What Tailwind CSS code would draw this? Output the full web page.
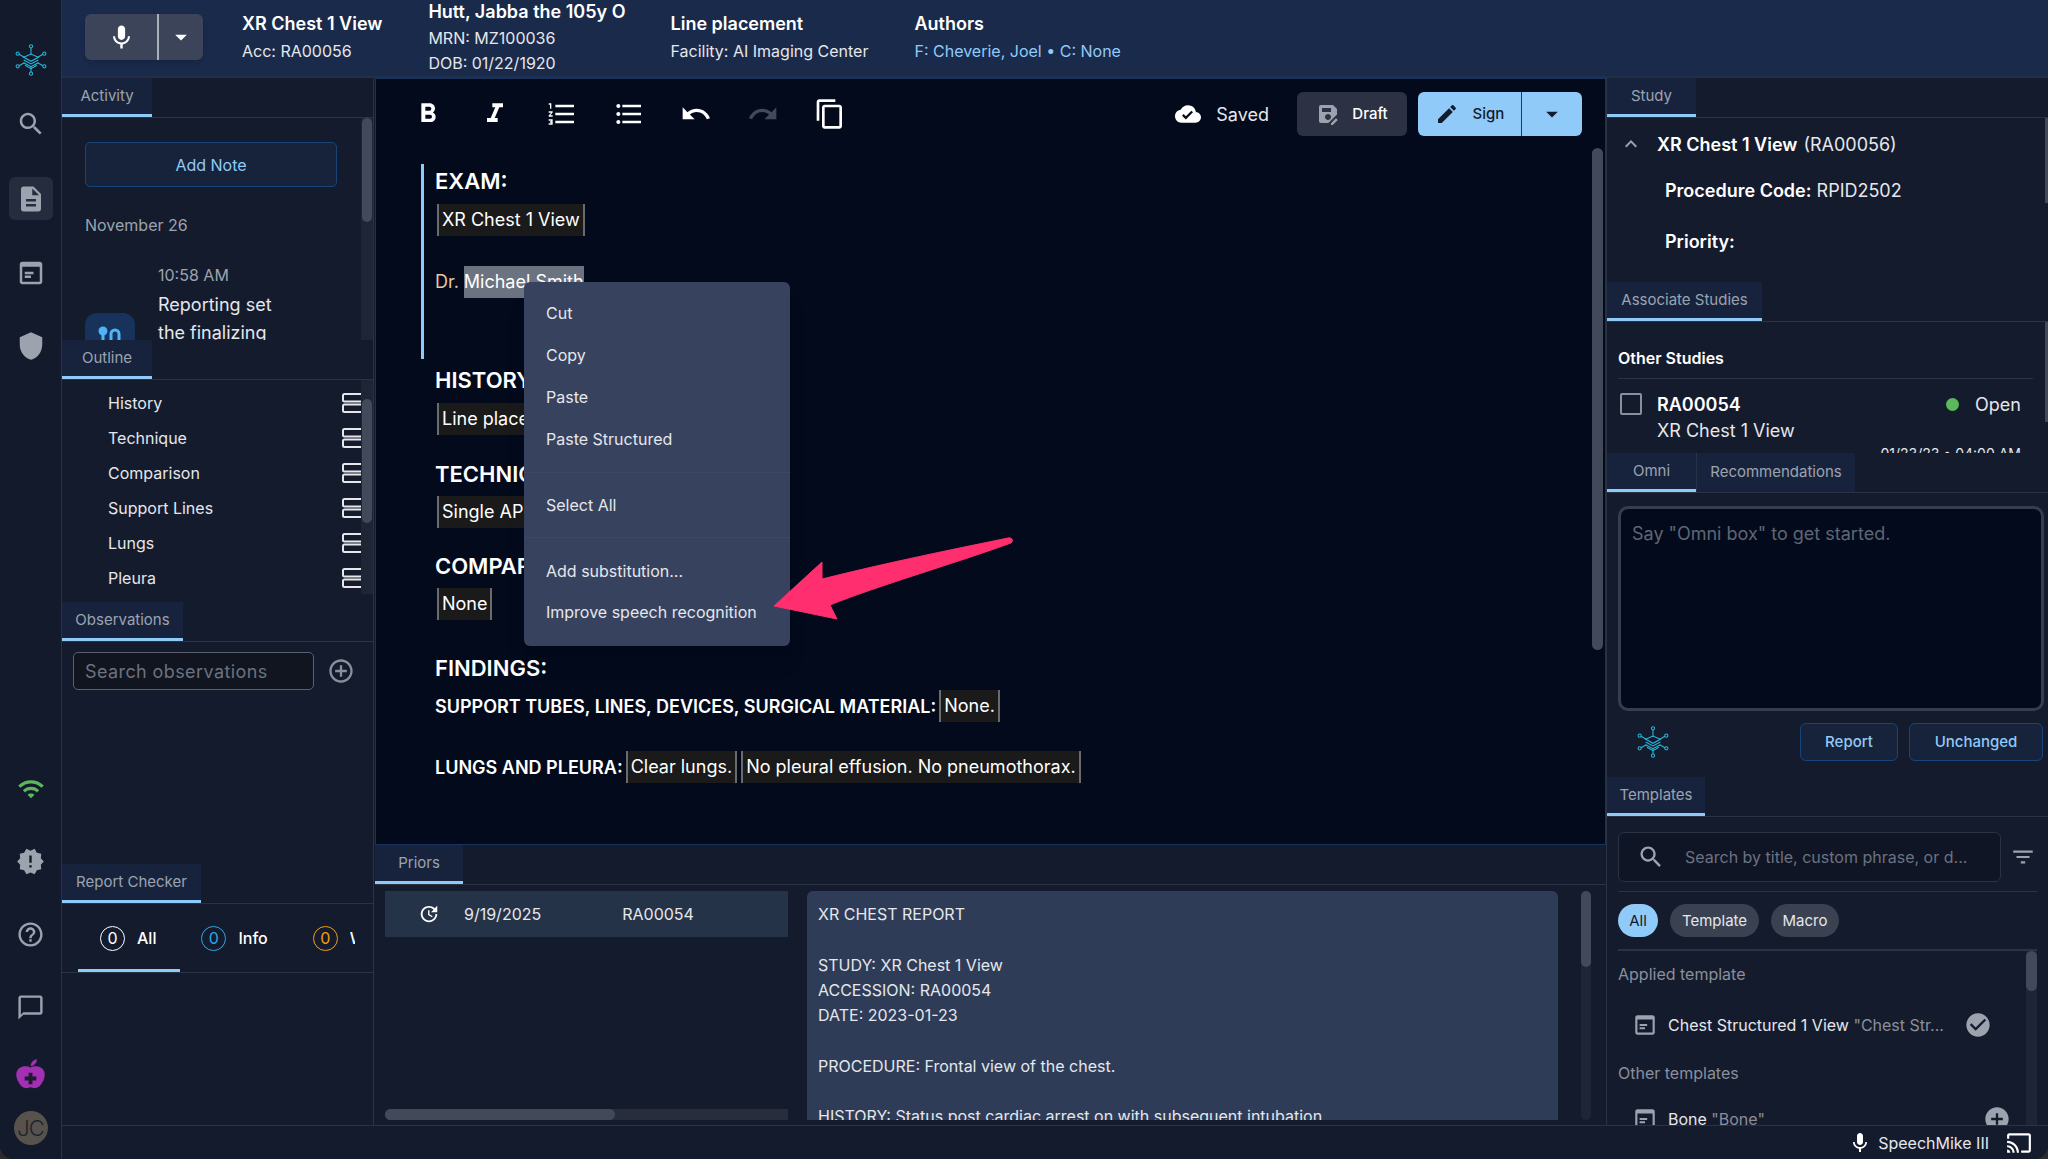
<!DOCTYPE html>
<html lang="en">
<head>
    <meta charset="UTF-8">
    <title>Report Editor</title>
    <script src="https://cdn.jsdelivr.net/npm/@tailwindcss/browser@4"></script>
</head>
<body class="bg-[#2b2b2b] font-[Inter,sans-serif] text-white overflow-hidden">
<svg class="hidden">
    <symbol id="logo" viewBox="0 0 48 48">
        <g fill="none" stroke="#29b6d8" stroke-width="1.6">
            <circle cx="24" cy="3.5" r="2.4"/><circle cx="24" cy="44.5" r="2.4"/>
            <circle cx="4" cy="14.5" r="2.4"/><circle cx="44" cy="14.5" r="2.4"/>
            <circle cx="4" cy="33.5" r="2.4"/><circle cx="44" cy="33.5" r="2.4"/>
            <path d="M24 6v10M24 33v9M6 15.5l8 4.5M42 15.5l-8 4.5M6 32.5l8-4.5M42 32.5l-8-4.5"/>
            <path d="M13 20l11-5 11 5-11 6zM13 24l11 6 11-6M13 28l11 6 11-6M15 32l9 5 9-5"/>
        </g>
    </symbol>
</svg>
<div class="relative flex h-[1159px] w-[2048px] rounded-b-[14px] overflow-hidden bg-[#141b2d]">
    <!-- nav rail -->
    <nav class="w-[62px] shrink-0 flex flex-col items-center bg-[#131a2b] border-r border-[#2a3346] pt-[28px] pb-[14px]">
        <div class="h-[64px] flex items-center"><svg class="w-[32px] h-[36px]"><use href="#logo"/></svg></div>
        <div class="h-[64px] flex items-center">
            <svg class="w-[30px] h-[30px] fill-[#9ca3af]" viewBox="0 0 24 24"><path d="M15.5 14h-.79l-.28-.27C15.41 12.59 16 11.11 16 9.5 16 5.91 13.09 3 9.5 3S3 5.91 3 9.5 5.91 16 9.5 16c1.61 0 3.09-.59 4.23-1.57l.27.28v.79l5 4.99L20.49 19l-4.99-5zm-6 0C7.01 14 5 11.99 5 9.5S7.01 5 9.5 5 14 7.01 14 9.5 11.99 14 9.5 14z"/></svg>
        </div>
        <div class="mt-[21px] w-[44px] h-[43px] rounded-[6px] bg-[#252c3e] flex items-center justify-center">
            <svg class="w-[30px] h-[30px] fill-[#9ca3af]" viewBox="0 0 24 24"><path d="M14 2H6c-1.1 0-1.99.9-1.99 2L4 20c0 1.1.89 2 1.99 2H18c1.1 0 2-.9 2-2V8l-6-6zm2 16H8v-2h8v2zm0-4H8v-2h8v2zm-3-5V3.5L18.5 9H13z"/></svg>
        </div>
        <div class="mt-[31px] h-[43px] flex items-center">
            <svg class="w-[30px] h-[30px] fill-[#9ca3af]" viewBox="0 0 24 24"><path d="M19 3H5c-1.1 0-2 .9-2 2v14c0 1.1.9 2 2 2h14c1.1 0 2-.9 2-2V5c0-1.1-.9-2-2-2zm0 16H5V7h14v12zM7 13h7v-2H7v2zm0 3h5v-2H7v2z"/></svg>
        </div>
        <div class="mt-[30px] h-[43px] flex items-center">
            <svg class="w-[30px] h-[34px] fill-[#9ca3af]" viewBox="0 0 24 24"><path d="M12 1L3 5v6c0 5.55 3.84 10.74 9 12 5.16-1.26 9-6.45 9-12V5l-9-4z"/></svg>
        </div>
        <div class="mt-auto flex flex-col items-center">
            <div class="h-[73px] flex items-center">
                <svg class="w-[28px] h-[28px] fill-[#5cb85c]" viewBox="0 0 24 24"><path d="M1 9l2 2c4.97-4.97 13.03-4.97 18 0l2-2C16.93 2.93 7.08 2.93 1 9zm8 8l3 3 3-3c-1.65-1.66-4.34-1.66-6 0zm-4-4l2 2c2.76-2.76 7.24-2.76 10 0l2-2C15.14 9.14 8.87 9.14 5 13z"/></svg>
            </div>
            <div class="h-[73px] flex items-center">
                <svg class="w-[29px] h-[29px] fill-[#9ca3af]" viewBox="0 0 24 24"><path d="M23 12l-2.44-2.78.34-3.68-3.61-.82-1.89-3.18L12 3 8.6 1.54 6.71 4.72l-3.61.81.34 3.68L1 12l2.44 2.78-.34 3.69 3.61.82 1.89 3.18L12 21l3.4 1.46 1.89-3.18 3.61-.82-.34-3.68L23 12zm-10 5h-2v-2h2v2zm0-4h-2V7h2v6z"/></svg>
            </div>
            <div class="h-[73px] flex items-center">
                <svg class="w-[29px] h-[29px] fill-[#9ca3af]" viewBox="0 0 24 24"><path d="M11 18h2v-2h-2v2zm1-16C6.48 2 2 6.48 2 12s4.48 10 10 10 10-4.48 10-10S17.52 2 12 2zm0 18c-4.41 0-8-3.59-8-8s3.59-8 8-8 8 3.59 8 8-3.59 8-8 8zm0-14c-2.21 0-4 1.79-4 4h2c0-1.1.9-2 2-2s2 .9 2 2c0 2-3 1.75-3 5h2c0-2.25 3-2.5 3-5 0-2.21-1.79-4-4-4z"/></svg>
            </div>
            <div class="h-[73px] flex items-center">
                <svg class="w-[29px] h-[29px] fill-[#9ca3af]" viewBox="0 0 24 24"><path d="M20 2H4c-1.1 0-2 .9-2 2v18l4-4h14c1.1 0 2-.9 2-2V4c0-1.1-.9-2-2-2zm0 14H6l-2 2V4h16v12z"/></svg>
            </div>
            <div class="h-[60px] flex items-center">
                <svg class="w-[31px] h-[34px]" viewBox="0 0 24 26"><path fill="#a32fb3" d="M12 8C9 6 1.500 6.500 1 13c-.3 5 4 11 7.500 11 1.500 0 2.500-.7 3.500-.7s2 .7 3.500.7C19 24 23.300 18 23 13c-.5-6.500-8-7-11-5z"/><path fill="#a32fb3" d="M12 7c.2-3 2-5 5-5.500-.2 3-2 5-5 5.500z"/><path fill="#fff" fill-opacity="0" d="M0 0"/><path fill="#1c1c2e" d="M10.500 12h3v3h3v3h-3v3h-3v-3h-3v-3h3z"/></svg>
            </div>
            <div class="mt-[7px] w-[34px] h-[34px] rounded-full bg-[#57524c] text-[#1f2430] text-[22px] leading-[34px] text-center tracking-[-1px] font-light">JC</div>
        </div>
    </nav>

    <div class="flex-1 min-w-0 flex flex-col">
        <!-- top bar -->
        <header class="h-[78px] shrink-0 bg-[#1a2a4a] border-b-[2px] border-[#232f47] flex">
            <div class="ml-[23px] mt-[14px] w-[118px] h-[46px] rounded-[6px] bg-[#3b4459] shadow-md flex">
                <div class="w-[74px] flex items-center justify-center border-r-2 border-[#aab0bb]">
                    <svg class="w-[29px] h-[29px] fill-white" viewBox="0 0 24 24"><path d="M12 14c1.660 0 2.990-1.340 2.990-3L15 5c0-1.660-1.340-3-3-3S9 3.340 9 5v6c0 1.660 1.340 3 3 3zm5.300-3c0 3-2.540 5.100-5.300 5.100S6.700 14 6.700 11H5c0 3.410 2.720 6.230 6 6.720V21h2v-3.280c3.280-.48 6-3.300 6-6.720h-1.700z"/></svg>
                </div>
                <div class="flex-1 flex items-center justify-center">
                    <svg class="w-[28px] h-[28px] fill-white" viewBox="0 0 24 24"><path d="M7 10l5 5 5-5z"/></svg>
                </div>
            </div>
            <div class="ml-[39px] mt-[12px]">
                <div class="text-[18px] leading-[24px] font-semibold">XR Chest 1 View</div>
                <div class="text-[16px] leading-[24px] mt-[3px] text-[#e5e7eb]">Acc: RA00056</div>
            </div>
            <div class="ml-[46px] mt-0">
                <div class="text-[18px] leading-[23px] font-semibold">Hutt, Jabba the 105y O</div>
                <div class="text-[16px] leading-[25px] mt-[3px] text-[#e5e7eb]">MRN: MZ100036</div>
                <div class="text-[16px] leading-[25px] text-[#e5e7eb]">DOB: 01/22/1920</div>
            </div>
            <div class="ml-[45px] mt-[12px]">
                <div class="text-[18px] leading-[24px] font-semibold">Line placement</div>
                <div class="text-[16px] leading-[24px] mt-[3px] text-[#e5e7eb]">Facility: AI Imaging Center</div>
            </div>
            <div class="ml-[46px] mt-[12px]">
                <div class="text-[18px] leading-[24px] font-semibold">Authors</div>
                <div class="text-[16px] leading-[24px] mt-[3px] text-[#90caf9]">F: Cheverie, Joel &bull; C: None</div>
            </div>
        </header>

        <div class="flex-1 min-h-0 flex">
            <!-- left column -->
            <aside class="w-[312px] shrink-0 flex flex-col bg-[#141b2d] border-r border-[#2a3346]">
                <section class="h-[262px] flex flex-col overflow-hidden">
                    <div class="h-[40px] shrink-0 border-b border-[#2a3346]">
                        <div class="w-[90px] h-[39px] flex items-center justify-center bg-[#17233d] border-b-[3px] border-[#90caf9] text-[15px] text-[#9ca3af]">Activity</div>
                    </div>
                    <div class="relative flex-1 pl-[23px]">
                        <button class="mt-[24px] w-[252px] h-[45px] rounded-[5px] border border-[#17457a] bg-[#17233a] text-[#90caf9] text-[16px]">Add Note</button>
                        <div class="mt-[26px] text-[16px] leading-[24px] text-[#9ca3af]">November 26</div>
                        <div class="mt-[28px] ml-[73px] text-[16px] leading-[20px] text-[#9ca3af]">10:58 AM</div>
                        <div class="ml-[73px] mt-[6px] text-[18px] leading-[28px] text-[#e5e7eb]">Reporting set<br>the finalizing</div>
                        <div class="absolute left-[23px] top-[195px] w-[50px] h-[40px] rounded-t-[12px] bg-[#17335c] flex justify-center pt-[13px]">
                            <svg class="w-[26px] h-[20px] fill-none stroke-[#4fb3f6] stroke-[3]" viewBox="0 0 26 20"><circle cx="6" cy="5" r="3" fill="#4fb3f6"/><path d="M6 8v12M14 20V8a4 4 0 0 1 8 0v12"/></svg>
                        </div>
                        <div class="absolute right-0 top-0 bottom-0 w-[12px] bg-[#1e2535]"><div class="h-[104px] mx-[1px] rounded-full bg-[#424959]"></div></div>
                    </div>
                </section>
                <section class="h-[262px] flex flex-col overflow-hidden">
                    <div class="h-[40px] shrink-0 border-b border-[#2a3346]">
                        <div class="w-[90px] h-[39px] flex items-center justify-center bg-[#17233d] border-b-[3px] border-[#90caf9] text-[15px] text-[#9ca3af]">Outline</div>
                    </div>
                    <div class="relative flex-1 pl-[46px] pt-[5px]">
                        <div class="h-[35px] w-[257px] flex items-center justify-between text-[16px] text-[#e5e7eb]">History
                            <svg class="w-[24px] h-[24px] fill-none stroke-[#e5e7eb] stroke-2" viewBox="0 0 24 24"><rect x="2" y="3" width="20" height="7.500" rx="1.500"/><rect x="2" y="13.500" width="20" height="7.500" rx="1.500"/></svg>
                        </div>
                        <div class="h-[35px] w-[257px] flex items-center justify-between text-[16px] text-[#e5e7eb]">Technique
                            <svg class="w-[24px] h-[24px] fill-none stroke-[#e5e7eb] stroke-2" viewBox="0 0 24 24"><rect x="2" y="3" width="20" height="7.500" rx="1.500"/><rect x="2" y="13.500" width="20" height="7.500" rx="1.500"/></svg>
                        </div>
                        <div class="h-[35px] w-[257px] flex items-center justify-between text-[16px] text-[#e5e7eb]">Comparison
                            <svg class="w-[24px] h-[24px] fill-none stroke-[#e5e7eb] stroke-2" viewBox="0 0 24 24"><rect x="2" y="3" width="20" height="7.500" rx="1.500"/><rect x="2" y="13.500" width="20" height="7.500" rx="1.500"/></svg>
                        </div>
                        <div class="h-[35px] w-[257px] flex items-center justify-between text-[16px] text-[#e5e7eb]">Support Lines
                            <svg class="w-[24px] h-[24px] fill-none stroke-[#e5e7eb] stroke-2" viewBox="0 0 24 24"><rect x="2" y="3" width="20" height="7.500" rx="1.500"/><rect x="2" y="13.500" width="20" height="7.500" rx="1.500"/></svg>
                        </div>
                        <div class="h-[35px] w-[257px] flex items-center justify-between text-[16px] text-[#e5e7eb]">Lungs
                            <svg class="w-[24px] h-[24px] fill-none stroke-[#e5e7eb] stroke-2" viewBox="0 0 24 24"><rect x="2" y="3" width="20" height="7.500" rx="1.500"/><rect x="2" y="13.500" width="20" height="7.500" rx="1.500"/></svg>
                        </div>
                        <div class="h-[35px] w-[257px] flex items-center justify-between text-[16px] text-[#e5e7eb]">Pleura
                            <svg class="w-[24px] h-[24px] fill-none stroke-[#e5e7eb] stroke-2" viewBox="0 0 24 24"><rect x="2" y="3" width="20" height="7.500" rx="1.500"/><rect x="2" y="13.500" width="20" height="7.500" rx="1.500"/></svg>
                        </div>
                        <div class="absolute right-0 top-0 bottom-[8px] w-[12px] bg-[#1e2535]"><div class="mt-[19px] h-[124px] mx-[1px] rounded-full bg-[#424959]"></div></div>
                    </div>
                </section>
                <section class="h-[262px] flex flex-col">
                    <div class="h-[40px] shrink-0 border-b border-[#2a3346]">
                        <div class="w-[121px] h-[39px] flex items-center justify-center bg-[#17233d] border-b-[3px] border-[#90caf9] text-[15px] text-[#9ca3af]">Observations</div>
                    </div>
                    <div class="flex items-center pl-[11px] pt-[10px]">
                        <div class="w-[241px] h-[38px] rounded-[5px] border border-[#5a6070] bg-[#10151f] pl-[11px] flex items-center text-[18px] tracking-[0.4px] text-[#6b7280]">Search observations</div>
                        <svg class="ml-[13px] w-[28px] h-[28px] fill-[#8a8f9c]" viewBox="0 0 24 24"><path d="M13 7h-2v4H7v2h4v4h2v-4h4v-2h-4V7zm-1-5C6.480 2 2 6.480 2 12s4.480 10 10 10 10-4.480 10-10S17.520 2 12 2zm0 18c-4.410 0-8-3.590-8-8s3.590-8 8-8 8 3.590 8 8-3.590 8-8 8z"/></svg>
                    </div>
                </section>
                <section class="flex-1 flex flex-col">
                    <div class="h-[40px] shrink-0 border-b border-[#2a3346]">
                        <div class="w-[139px] h-[39px] flex items-center justify-center bg-[#17233d] border-b-[3px] border-[#90caf9] text-[15px] text-[#9ca3af]">Report Checker</div>
                    </div>
                    <div class="h-[69px] border-b border-[#2a3346] ml-0 flex items-center relative overflow-hidden">
                        <div class="absolute left-[16px] bottom-0 w-[102px] h-[3px] bg-[#90caf9]"></div>
                        <div class="absolute left-[294px] top-0 bottom-0 w-[18px] bg-[#141b2d]"></div>
                        <span class="ml-[38px] w-[25px] h-[25px] rounded-full border border-white text-[16px] leading-[23px] text-center">0</span>
                        <span class="ml-[12px] text-[16px] font-medium">All</span>
                        <span class="ml-[45px] w-[25px] h-[25px] rounded-full border border-[#29a9e8] text-[#29a9e8] text-[16px] leading-[23px] text-center">0</span>
                        <span class="ml-[12px] text-[16px] font-medium">Info</span>
                        <span class="ml-[45px] w-[25px] h-[25px] rounded-full border border-[#f59e0b] text-[#f59e0b] text-[16px] leading-[23px] text-center">0</span>
                        <span class="ml-[12px] w-[5px] overflow-hidden text-[16px] font-medium">Warning</span>
                    </div>
                </section>
            </aside>

            <!-- center column -->
            <main class="w-[1232px] shrink-0 flex flex-col pl-[1px]">
                <section class="relative h-[767px] shrink-0 bg-[#030a1c] border border-[#17325f] overflow-hidden">
                    <div class="h-[70px] flex items-center">
                        <div class="flex items-center pl-[36px] gap-[35px]">
                            <svg class="w-[32px] h-[32px] fill-white" viewBox="0 0 24 24"><path d="M15.600 10.790c.97-.67 1.650-1.770 1.650-2.790 0-2.260-1.750-4-4-4H7v14h7.040c2.090 0 3.710-1.700 3.710-3.790 0-1.520-.86-2.820-2.150-3.420zM10 6.500h3c.83 0 1.500.67 1.500 1.500s-.67 1.500-1.500 1.500h-3v-3zm3.500 9H10v-3h3.500c.83 0 1.500.67 1.500 1.500s-.67 1.500-1.500 1.500z"/></svg>
                            <svg class="w-[32px] h-[32px] fill-white" viewBox="0 0 24 24"><path d="M10 4v3h2.210l-3.420 8H6v3h8v-3h-2.210l3.420-8H18V4z"/></svg>
                            <svg class="w-[32px] h-[32px] fill-white" viewBox="0 0 24 24"><path d="M2 17h2v.5H3v1h1v.5H2v1h3v-4H2v1zm1-9h1V4H2v1h1v3zm-1 3h1.800L2 13.100v.9h3v-1H3.200L5 10.900V10H2v1zm5-6v2h14V5H7zm0 14h14v-2H7v2zm0-6h14v-2H7v2z"/></svg>
                            <svg class="w-[32px] h-[32px] fill-white" viewBox="0 0 24 24"><path d="M4 10.500c-.83 0-1.500.67-1.500 1.500s.67 1.500 1.500 1.500 1.500-.67 1.500-1.500-.67-1.500-1.500-1.500zm0-6c-.83 0-1.500.67-1.500 1.500S3.170 7.500 4 7.500 5.500 6.830 5.500 6 4.830 4.500 4 4.500zm0 12c-.83 0-1.500.68-1.500 1.500s.68 1.500 1.500 1.500 1.500-.68 1.500-1.500-.67-1.500-1.500-1.500zM7 19h14v-2H7v2zm0-6h14v-2H7v2zm0-8v2h14V5H7z"/></svg>
                            <svg class="w-[32px] h-[32px] fill-white" viewBox="0 0 24 24"><path d="M12.500 8c-2.650 0-5.050.99-6.900 2.600L2 7v9h9l-3.620-3.620c1.390-1.160 3.160-1.880 5.120-1.880 3.540 0 6.550 2.310 7.600 5.500l2.370-.78C21.080 11.030 17.150 8 12.500 8z"/></svg>
                            <svg class="w-[32px] h-[32px] fill-[#424959]" viewBox="0 0 24 24"><path d="M18.400 10.600C16.550 8.990 14.150 8 11.500 8c-4.650 0-8.580 3.030-9.960 7.220L3.900 16c1.050-3.190 4.050-5.500 7.600-5.500 1.950 0 3.730.72 5.120 1.880L13 16h9V7l-3.600 3.600z"/></svg>
                            <svg class="w-[32px] h-[32px] fill-white" viewBox="0 0 24 24"><path d="M16 1H4c-1.100 0-2 .9-2 2v14h2V3h12V1zm3 4H8c-1.100 0-2 .9-2 2v14c0 1.100.9 2 2 2h11c1.100 0 2-.9 2-2V7c0-1.100-.9-2-2-2zm0 16H8V7h11v14z"/></svg>
                        </div>
                        <div class="ml-auto flex items-center pr-[23px]">
                            <svg class="w-[26px] h-[26px] fill-white" viewBox="0 0 24 24"><path d="M19.350 10.040C18.670 6.590 15.640 4 12 4 9.110 4 6.600 5.640 5.350 8.040 2.340 8.360 0 10.910 0 14c0 3.310 2.690 6 6 6h13c2.760 0 5-2.240 5-5 0-2.640-2.050-4.780-4.650-4.960zM10 17l-3.500-3.500 1.410-1.410L10 14.170 15.180 9l1.410 1.410L10 17z"/></svg>
                            <span class="ml-[15px] text-[18px] text-[#e5e7eb]">Saved</span>
                            <div class="ml-[28px] w-[110px] h-[44px] rounded-[6px] bg-[#2c3243] flex items-center justify-center gap-[12px] text-[15px] font-medium">
                                <svg class="w-[24px] h-[24px] fill-[#9ca3af]" viewBox="0 0 24 24"><path d="M21 12.400V7l-4-4H5C3.890 3 3 3.900 3 5v14c0 1.100.89 2 2 2h7.400L21 12.400zM15 15c0 1.660-1.340 3-3 3s-3-1.340-3-3 1.340-3 3-3 3 1.340 3 3zM6 6h9v4H6V6zM19.990 16.250l1.770 1.770L16.770 23H15v-1.770l4.990-4.980z"/></svg>
                                Draft
                            </div>
                            <div class="ml-[11px] w-[164px] h-[44px] rounded-[6px] bg-[#90caf9] flex text-[#141b2d] text-[15px] font-medium">
                                <div class="w-[104px] flex items-center justify-center gap-[14px] border-r border-[#1c3a66]">
                                    <svg class="w-[24px] h-[24px] fill-[#141b2d]" viewBox="0 0 24 24"><path d="M3 17.250V21h3.750L17.810 9.940l-3.750-3.750L3 17.250zM20.710 7.040c.39-.39.39-1.020 0-1.410l-2.340-2.340c-.39-.39-1.020-.39-1.410 0l-1.830 1.830 3.750 3.750 1.830-1.830z"/></svg>
                                    Sign
                                </div>
                                <div class="flex-1 flex items-center justify-center">
                                    <svg class="w-[28px] h-[28px] fill-[#141b2d]" viewBox="0 0 24 24"><path d="M7 10l5 5 5-5z"/></svg>
                                </div>
                            </div>
                        </div>
                    </div>
                    <!-- report body -->
                    <div class="ml-[45px] mt-[15px] border-l-[3px] border-[#90caf9] h-[195px] pl-[11px] pt-[2px]">
                        <div class="text-[22px] leading-[30px] font-semibold">EXAM:</div>
                        <div class="mt-[8px] ml-[2px] inline-block h-[32px] px-[3px] bg-[#1a1a1a] border-x-[2px] border-[#6b6b6b] text-[18px] leading-[31px]">XR Chest 1 View</div>
                        <div class="mt-[30px] flex h-[32px] text-[18px] leading-[32px]">
                            <span class="text-[#e8c8a0] mr-[5px]">Dr.</span>
                            <span class="bg-[#6b7280] px-0">Michael Smith</span>
                        </div>
                    </div>
                    <div class="ml-[59px] mt-[6px]">
                        <div class="text-[22px] leading-[30px] font-semibold">HISTORY:</div>
                        <div class="mt-[8px] ml-[2px] inline-block h-[32px] px-[3px] bg-[#1a1a1a] border-x-[2px] border-[#6b6b6b] text-[18px] leading-[31px]">Line placement</div>
                        <div class="mt-[24px] text-[22px] leading-[30px] font-semibold">TECHNIQUE:</div>
                        <div class="mt-[7px] ml-[2px] inline-block h-[32px] px-[3px] bg-[#1a1a1a] border-x-[2px] border-[#6b6b6b] text-[18px] leading-[31px]">Single AP view</div>
                        <div class="mt-[23px] text-[22px] leading-[30px] font-semibold">COMPARISON:</div>
                        <div class="mt-[7px] ml-[2px] inline-block h-[32px] px-[3px] bg-[#1a1a1a] border-x-[2px] border-[#6b6b6b] text-[18px] leading-[31px]">None</div>
                        <div class="mt-[33px] text-[22px] leading-[30px] font-semibold">FINDINGS:</div>
                        <div class="mt-[7px] flex items-center h-[32px] text-[18px]">
                            <span class="font-semibold mr-[3px]">SUPPORT TUBES, LINES, DEVICES, SURGICAL MATERIAL:</span>
                            <span class="h-[32px] px-[3px] bg-[#1a1a1a] border-x-[2px] border-[#6b6b6b] leading-[31px]">None.</span>
                        </div>
                        <div class="mt-[29px] flex items-center h-[32px] text-[18px]">
                            <span class="font-semibold mr-[3px]">LUNGS AND PLEURA:</span>
                            <span class="h-[32px] px-[3px] bg-[#1a1a1a] border-x-[2px] border-[#6b6b6b] leading-[31px]">Clear lungs.</span>
                            <span class="ml-[4px] h-[32px] px-[3px] bg-[#1a1a1a] border-x-[2px] border-[#6b6b6b] leading-[31px]">No pleural effusion. No pneumothorax.</span>
                        </div>
                    </div>
                    <div class="absolute right-[2px] top-[69px] w-[11px] h-[502px] rounded-full bg-[#424959]"></div>
                </section>
                <section class="flex-1 flex flex-col min-h-0">
                    <div class="h-[40px] shrink-0 border-b border-[#2a3346]">
                        <div class="w-[88px] h-[39px] flex items-center justify-center bg-[#17233d] border-b-[3px] border-[#90caf9] text-[15px] text-[#9ca3af]">Priors</div>
                    </div>
                    <div class="flex-1 min-h-0 flex pl-[10px] pt-[6px] pb-[5px]">
                        <div class="w-[403px] flex flex-col justify-between">
                            <div class="h-[46px] bg-[#253349] flex items-center text-[16px] text-[#e5e7eb]">
                                <svg class="ml-[33px] w-[22px] h-[22px] fill-white" viewBox="0 0 24 24"><path d="M21 10.120h-6.780l2.740-2.820c-2.730-2.700-7.150-2.800-9.880-.1-2.730 2.710-2.730 7.080 0 9.790s7.150 2.710 9.880 0C18.320 15.650 19 14.080 19 12.100h2c0 1.980-.88 4.550-2.640 6.290-3.510 3.480-9.210 3.480-12.720 0-3.500-3.470-3.530-9.110-.02-12.580s9.140-3.470 12.650 0L21 3v7.120zM12.500 8v4.250l3.500 2.080-.72 1.210L11 13V8h1.500z"/></svg>
                                <span class="ml-[24px]">9/19/2025</span>
                                <span class="ml-[81px]">RA00054</span>
                            </div>
                            <div class="h-[11px] bg-[#272d3c] rounded-l-full"><div class="w-[230px] h-full rounded-full bg-[#424959]"></div></div>
                        </div>
                        <div class="ml-[19px] w-[751px] rounded-t-[6px] bg-[#2e3c58] px-[11px] pt-[11px] overflow-hidden text-[16px] leading-[25.300px] text-[#e5e7eb] whitespace-pre-line">XR CHEST REPORT

STUDY: XR Chest 1 View
ACCESSION: RA00054
DATE: 2023-01-23

PROCEDURE: Frontal view of the chest.

HISTORY: Status post cardiac arrest on with subsequent intubation.</div>
                        <div class="ml-[23px] w-[10px] bg-[#1e2535] rounded-full"><div class="h-[76px] rounded-full bg-[#424959]"></div></div>
                    </div>
                </section>
            </main>

            <!-- right column -->
            <aside class="flex-1 min-w-0 flex flex-col border-l border-[#2a3346] bg-[#141b2d]">
                <section class="h-[204px] shrink-0 relative">
                    <div class="h-[40px] border-b border-[#2a3346]">
                        <div class="w-[89px] h-[39px] flex items-center justify-center bg-[#17233d] border-b-[3px] border-[#90caf9] text-[15px] text-[#9ca3af]">Study</div>
                    </div>
                    <div class="mt-[13px] pl-[12px] flex items-center h-[26px]">
                        <svg class="w-[24px] h-[24px] fill-[#9ca3af]" viewBox="0 0 24 24"><path d="M12 8l-6 6 1.410 1.410L12 10.830l4.590 4.580L18 14z"/></svg>
                        <span class="ml-[14px] text-[18px] font-semibold">XR Chest 1 View</span>
                        <span class="ml-[6px] text-[18px] text-[#e5e7eb]">(RA00056)</span>
                    </div>
                    <div class="mt-[21px] ml-[58px] h-[26px] text-[18px] leading-[26px] text-[#e5e7eb]"><span class="font-semibold text-white">Procedure Code:</span> RPID2502</div>
                    <div class="mt-[25px] ml-[58px] h-[26px] text-[18px] leading-[26px] font-semibold">Priority:</div>
                    <div class="absolute right-0 top-[40px] w-[3px] h-[85px] bg-[#424959]"></div>
                </section>
                <section class="h-[171px] shrink-0 relative overflow-hidden">
                    <div class="h-[40px] border-b border-[#2a3346]">
                        <div class="w-[155px] h-[39px] flex items-center justify-center bg-[#17233d] border-b-[3px] border-[#90caf9] text-[15px] text-[#9ca3af]">Associate Studies</div>
                    </div>
                    <div class="mt-[24px] ml-[11px] w-[415px] h-[33px] border-b border-[#2a3346] text-[16px] leading-[25px] font-semibold">Other Studies</div>
                    <div class="mt-[14px] ml-[13px] flex items-center h-[22px]">
                        <div class="w-[22px] h-[22px] rounded-[2px] border-2 border-[#8a8f9c]"></div>
                        <span class="ml-[15px] text-[18px] font-semibold">RA00054</span>
                        <span class="ml-auto mr-[28px] w-[13px] h-[13px] rounded-full bg-[#5cb85c]"></span>
                        <span class="mr-[27px] -ml-[16px] pl-[4px] text-[18px] text-[#e5e7eb]">Open</span>
                    </div>
                    <div class="ml-[50px] mt-[3px] text-[18px] leading-[26px] text-[#e5e7eb]">XR Chest 1 View</div>
                    <div class="text-right pr-[27px] text-[14px] text-[#e5e7eb] leading-[20px]">01/23/23 • 04:00 AM</div>
                    <div class="absolute right-0 top-[40px] w-[3px] h-[100px] bg-[#424959]"></div>
                </section>
                <section class="h-[324px] shrink-0">
                    <div class="h-[40px] border-b border-[#2a3346] flex">
                        <div class="w-[89px] h-[39px] flex items-center justify-center bg-[#17233d] border-b-[3px] border-[#90caf9] text-[15px] text-[#9ca3af]">Omni</div>
                        <div class="w-[159px] h-[39px] flex items-center justify-center bg-[#17233d] border-l border-[#2a3346] text-[15px] text-[#9ca3af]">Recommendations</div>
                    </div>
                    <div class="mt-[13px] ml-[11px] w-[426px] h-[205px] rounded-[10px] border-[3px] border-[#353d50] bg-[#030a1c] px-[11px] py-[11px] text-[18px] text-[#5f6673]">Say "Omni box" to get started.</div>
                    <div class="mt-[12px] ml-[11px] w-[425px] flex items-center">
                        <svg class="ml-[19px] w-[32px] h-[36px]"><use href="#logo"/></svg>
                        <button class="ml-auto w-[98px] h-[38px] rounded-[6px] border border-[#17457a] bg-[#17233a] text-[#90caf9] text-[15px] font-medium">Report</button>
                        <button class="ml-[11px] w-[134px] h-[38px] rounded-[6px] border border-[#17457a] bg-[#17233a] text-[#90caf9] text-[15px] font-medium">Unchanged</button>
                    </div>
                </section>
                <section class="flex-1 min-h-0 flex flex-col overflow-hidden">
                    <div class="h-[40px] shrink-0 border-b border-[#2a3346]">
                        <div class="w-[98px] h-[39px] flex items-center justify-center bg-[#17233d] border-b-[3px] border-[#90caf9] text-[15px] text-[#9ca3af]">Templates</div>
                    </div>
                    <div class="mx-[11px] mt-[15px] flex items-center">
                        <div class="w-[383px] h-[50px] rounded-[6px] border border-[#2a3346] bg-[#0f1524] flex items-center">
                            <svg class="ml-[18px] w-[28px] h-[28px] fill-[#9ca3af]" viewBox="0 0 24 24"><path d="M15.500 14h-.79l-.28-.27C15.410 12.590 16 11.110 16 9.500 16 5.910 13.090 3 9.500 3S3 5.910 3 9.500 5.910 16 9.500 16c1.610 0 3.090-.59 4.230-1.570l.27.28v.79l5 4.990L20.490 19l-4.990-5zm-6 0C7.010 14 5 11.990 5 9.500S7.010 5 9.500 5 14 7.010 14 9.500 11.990 14 9.500 14z"/></svg>
                            <span class="ml-[20px] text-[16px] text-[#6b7280] whitespace-nowrap">Search by title, custom phrase, or d...</span>
                        </div>
                        <svg class="ml-[9px] w-[26px] h-[26px] fill-[#9ca3af]" viewBox="0 0 24 24"><path d="M10 18h4v-2h-4v2zM3 6v2h18V6H3zm3 7h12v-2H6v2z"/></svg>
                    </div>
                    <div class="mx-[11px] mt-[9px] border-t border-[#2a3346] pt-[12px] flex gap-[12px] pb-[12px] text-[15px]">
                        <span class="w-[40px] h-[33px] rounded-full bg-[#90caf9] text-[#141b2d] text-center leading-[33px]">All</span>
                        <span class="w-[89px] h-[33px] rounded-full bg-[#3a4252] text-center leading-[33px] text-[#e5e7eb]">Template</span>
                        <span class="w-[68px] h-[33px] rounded-full bg-[#3a4252] text-center leading-[33px] text-[#e5e7eb]">Macro</span>
                    </div>
                    <div class="relative mx-[11px] flex-1 min-h-0 border-t-2 border-[#2a3346] overflow-hidden">
                        <div class="mt-[11px] text-[16px] leading-[24px] text-[#8a8f9c]">Applied template</div>
                        <div class="mt-[26px] ml-[14px] h-[26px] flex items-center text-[16px] text-[#e5e7eb]">
                            <svg class="w-[26px] h-[26px] fill-[#9ca3af]" viewBox="0 0 24 24"><path d="M19 3H5c-1.100 0-2 .9-2 2v14c0 1.100.9 2 2 2h14c1.100 0 2-.9 2-2V5c0-1.100-.9-2-2-2zm0 16H5V7h14v12zM7 13h7v-2H7v2zm0 3h5v-2H7v2z"/></svg>
                            <span class="ml-[10px] whitespace-nowrap">Chest Structured 1 View <span class="text-[#8a8f9c]">"Chest Str...</span></span>
                            <svg class="ml-[20px] w-[28px] h-[28px] fill-[#9ca3af]" viewBox="0 0 24 24"><path d="M12 2C6.480 2 2 6.480 2 12s4.480 10 10 10 10-4.480 10-10S17.520 2 12 2zm-2 15l-5-5 1.410-1.410L10 14.170l7.590-7.590L19 8l-9 9z"/></svg>
                        </div>
                        <div class="mt-[23px] text-[16px] leading-[24px] text-[#8a8f9c]">Other templates</div>
                        <div class="mt-[21px] ml-[14px] h-[26px] flex items-center text-[16px] text-[#e5e7eb]">
                            <svg class="w-[26px] h-[26px] fill-[#9ca3af]" viewBox="0 0 24 24"><path d="M19 3H5c-1.100 0-2 .9-2 2v14c0 1.100.9 2 2 2h14c1.100 0 2-.9 2-2V5c0-1.100-.9-2-2-2zm0 16H5V7h14v12zM7 13h7v-2H7v2zm0 3h5v-2H7v2z"/></svg>
                            <span class="ml-[10px]">Bone <span class="text-[#8a8f9c]">"Bone"</span></span>
                            <svg class="ml-auto mr-[26px] w-[28px] h-[28px] fill-[#9ca3af]" viewBox="0 0 24 24"><path d="M12 2C6.480 2 2 6.480 2 12s4.480 10 10 10 10-4.480 10-10S17.520 2 12 2zm5 11h-4v4h-2v-4H7v-2h4V7h2v4h4v2z"/></svg>
                        </div>
                        <div class="absolute right-0 top-0 bottom-0 w-[11px] bg-[#1e2535]"><div class="h-[40px] rounded-full bg-[#424959]"></div></div>
                    </div>
                </section>
            </aside>
        </div>

        <!-- status bar -->
        <footer class="h-[34px] shrink-0 bg-[#141b2d] border-t border-[#2a3346] flex items-center justify-end pr-[16px] text-[16px]">
            <svg class="w-[24px] h-[24px] fill-white" viewBox="0 0 24 24"><path d="M12 14c1.660 0 2.990-1.340 2.990-3L15 5c0-1.660-1.340-3-3-3S9 3.340 9 5v6c0 1.660 1.340 3 3 3zm5.300-3c0 3-2.540 5.100-5.300 5.100S6.700 14 6.700 11H5c0 3.410 2.720 6.230 6 6.720V21h2v-3.280c3.280-.48 6-3.300 6-6.720h-1.700z"/></svg>
            <span class="ml-[6px] text-[#e5e7eb]">SpeechMike III</span>
            <svg class="ml-[17px] w-[26px] h-[26px] fill-white" viewBox="0 0 24 24"><path d="M21 3H3c-1.100 0-2 .9-2 2v3h2V5h18v14h-7v2h7c1.100 0 2-.9 2-2V5c0-1.100-.9-2-2-2zM1 18v3h3c0-1.660-1.340-3-3-3zm0-4v2c2.760 0 5 2.240 5 5h2c0-3.870-3.130-7-7-7zm0-4v2c4.970 0 9 4.030 9 9h2c0-6.080-4.930-11-11-11z"/></svg>
        </footer>
    </div>

    <!-- context menu -->
    <div class="absolute left-[524px] top-[282px] w-[266px] h-[364px] rounded-[6px] bg-[#37425e] shadow-xl text-[16px] text-[#e5e7eb] pl-[22px] pt-[10px]">
        <div class="h-[42px] leading-[42px]">Cut</div>
        <div class="h-[42px] leading-[42px]">Copy</div>
        <div class="h-[42px] leading-[42px]">Paste</div>
        <div class="h-[42px] leading-[42px]">Paste Structured</div>
        <div class="-ml-[22px] mt-[12px] border-t border-[#3d4866] pl-[22px] pt-[11px] h-[65px] leading-[42px]">Select All</div>
        <div class="-ml-[22px] border-t border-[#3d4866] pl-[22px] pt-[12px] h-[54px] leading-[42px]">Add substitution...</div>
        <div class="h-[42px] leading-[42px]">Improve speech recognition</div>
    </div>
    <svg class="absolute left-[760px] top-[530px] w-[260px] h-[100px]" viewBox="760 530 260 100"><path fill="#ff2e6e" stroke="#ff2e6e" stroke-linejoin="round" stroke-width="1" d="M774 606L822 562V579C890 562 950 550 1008 538C1012 537 1014 541 1011 543C950 565 880 585 830 605L837 619Z"/></svg>
</div>
</body>
</html>
